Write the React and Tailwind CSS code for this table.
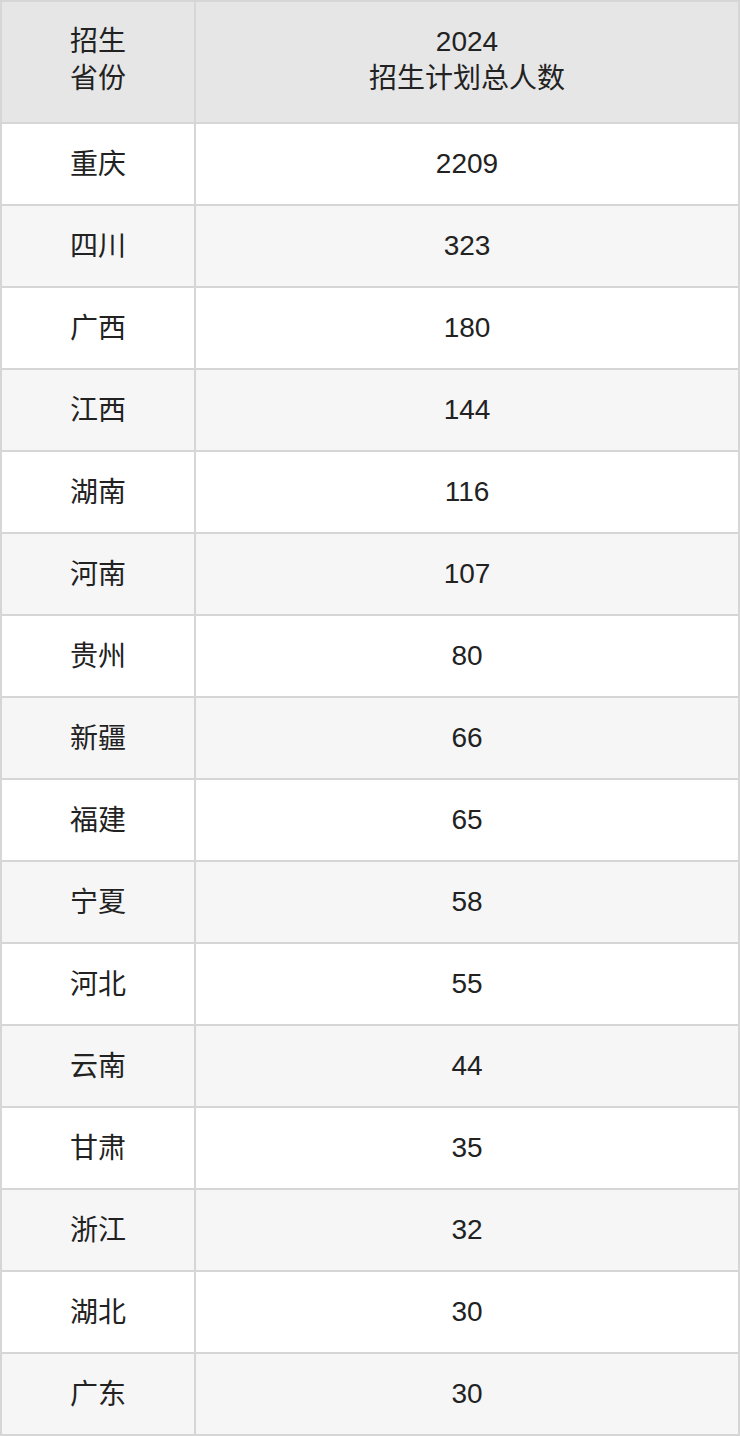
const rows = [
  ['重庆', '2209'],
  ['四川', '323'],
  ['广西', '180'],
  ['江西', '144'],
  ['湖南', '116'],
  ['河南', '107'],
  ['贵州', '80'],
  ['新疆', '66'],
  ['福建', '65'],
  ['宁夏', '58'],
  ['河北', '55'],
  ['云南', '44'],
  ['甘肃', '35'],
  ['浙江', '32'],
  ['湖北', '30'],
  ['广东', '30'],
]

const font = { fontFamily: '"Liberation Sans", "Noto Sans CJK SC", sans-serif' }

export default function App() {
  return (
    <div className="w-[740px] bg-white" style={font}>
      {/* Table */}
      <div className="grid grid-cols-[192px_1fr] gap-[2px] bg-[#d6d6d6] p-[2px] text-[28px] text-[#222222]">
        <div className="flex h-[120px] flex-col items-center justify-center bg-[#e6e6e6] pb-[4px] text-center">
          <span className="block h-[37px] leading-[37px]">招生</span>
          <span className="block h-[37px] leading-[37px]">省份</span>
        </div>
        <div className="flex h-[120px] flex-col items-center justify-center bg-[#e6e6e6] pb-[4px] text-center">
          <span className="block h-[37px] leading-[37px]">2024</span>
          <span className="block h-[37px] leading-[37px]">招生计划总人数</span>
        </div>
        {rows.map(([province, count], i) => {
          const bg = i % 2 === 0 ? 'bg-white' : 'bg-[#f6f6f6]'
          return [
            <div key={province + 'p'} className={`flex h-[80px] items-center justify-center leading-[37px] ${bg}`}>
              {province}
            </div>,
            <div key={province + 'c'} className={`flex h-[80px] items-center justify-center pb-[2px] leading-[37px] ${bg}`}>
              {count}
            </div>,
          ]
        })}
      </div>
    </div>
  )
}
